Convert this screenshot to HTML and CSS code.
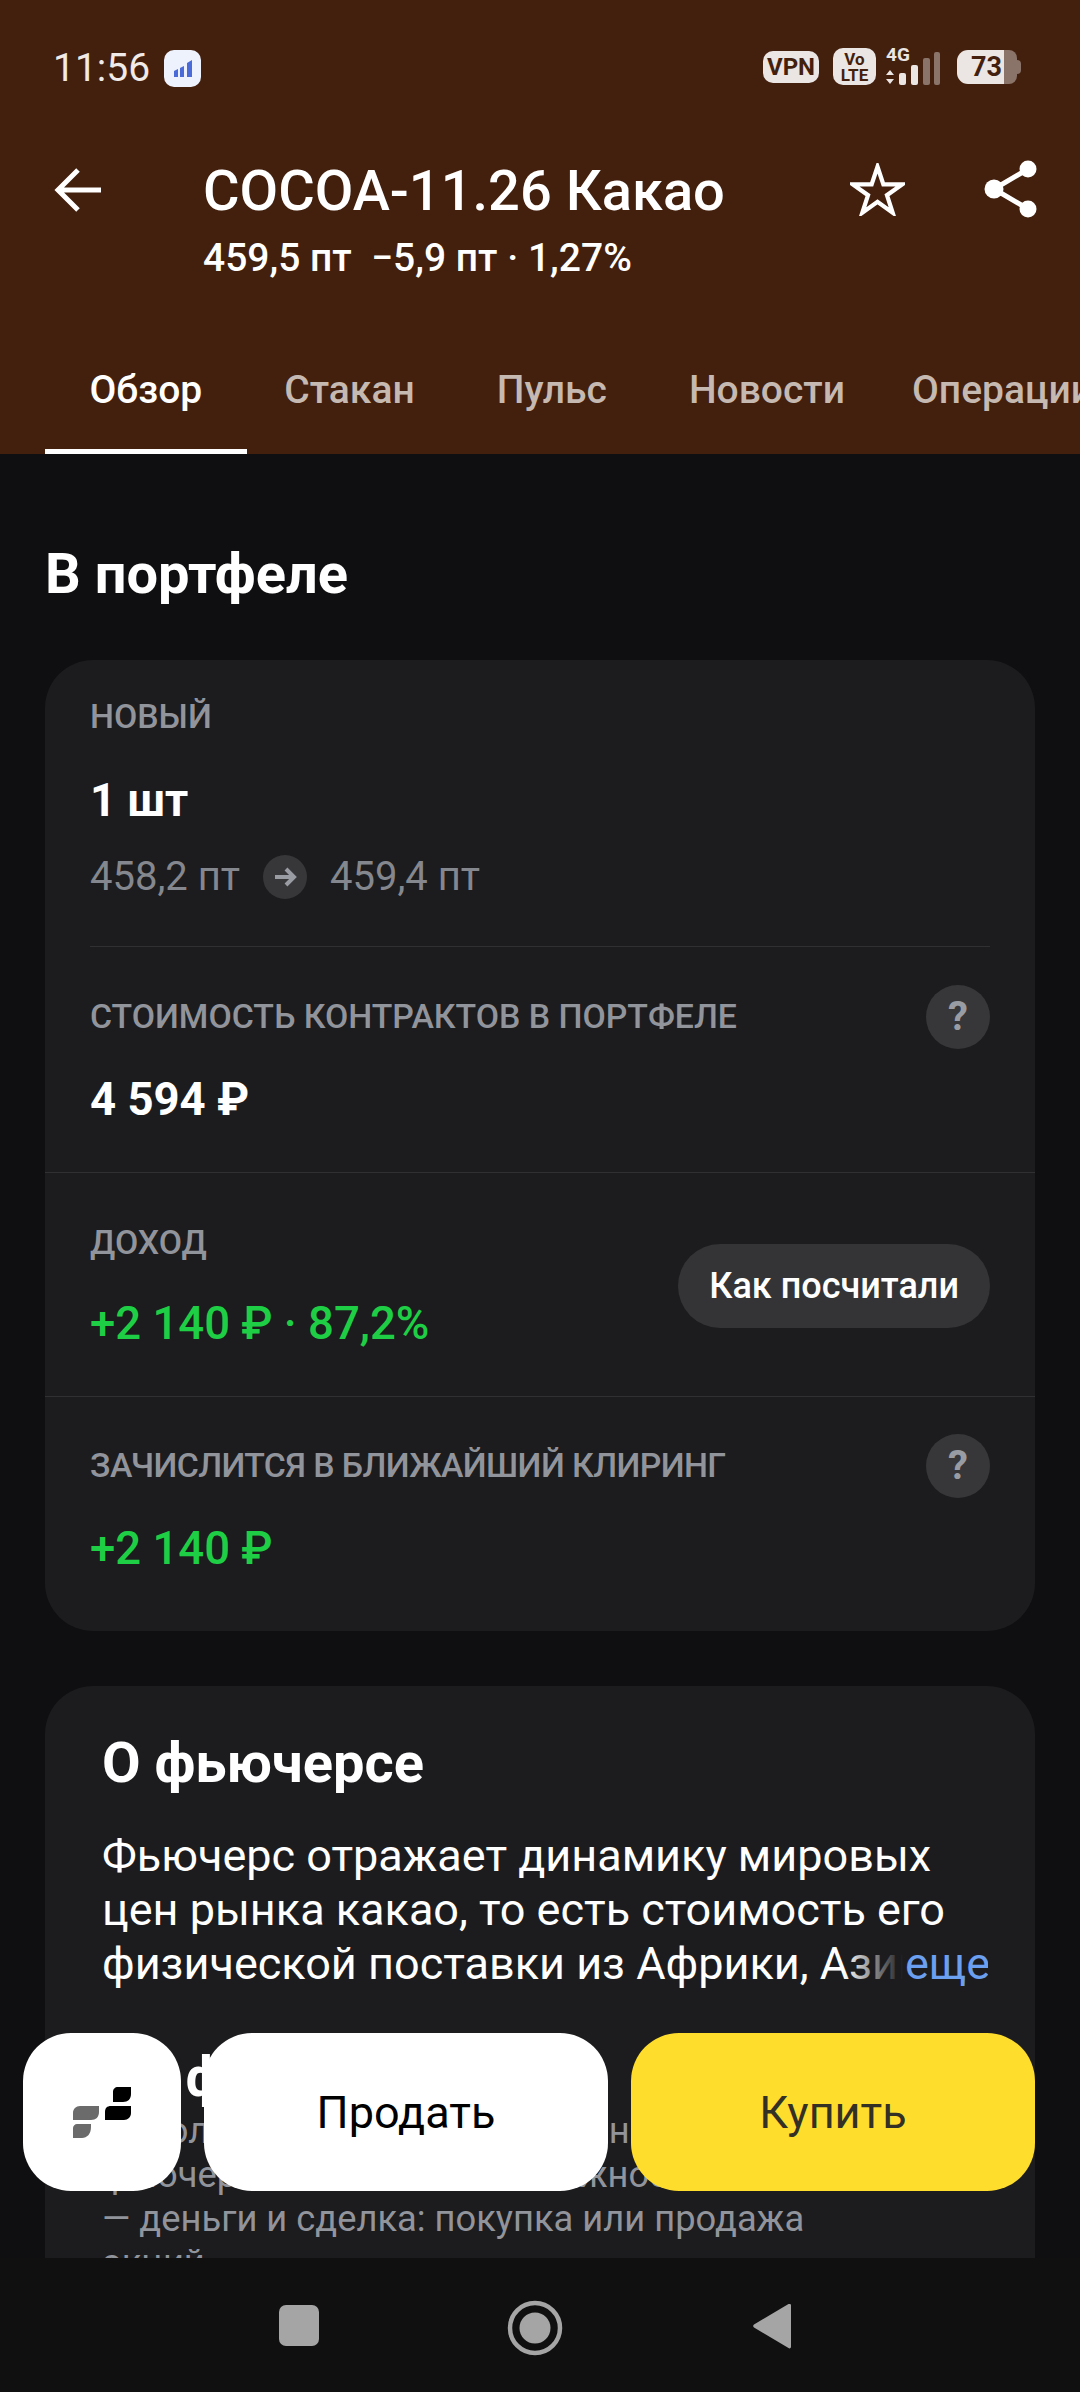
FILE: index.html
```html
<!DOCTYPE html>
<html lang="ru">
<head>
<meta charset="utf-8">
<title>COCOA-11.26 Какао</title>
<link rel="stylesheet" href="styles.css">
</head>
<body>
<div class="screen">
  <header class="top">
    <div class="status">
      <div class="status-left">
        <span class="time">11:56</span>
        <svg class="app-ind" width="37" height="37" viewBox="0 0 37 37"><rect width="37" height="37" rx="10" fill="#eef2fd"/><path d="M10 21l4-2v8h-4zM16 18l4-2v11h-4zM23 13l5-3v17h-5z" fill="#4a6bd8"/></svg>
      </div>
      <div class="status-right">
        <span class="pill vpn">VPN</span>
        <span class="pill volte">Vo<br>LTE</span>
        <div class="signal">
          <span class="net">4G</span>
          <svg width="54" height="38" viewBox="0 0 54 38"><path d="M0 17l4-5 4 5zM0 21h8l-4 5z" transform="translate(0 6)" fill="#ebe6e3"/><rect x="13" y="21" width="7" height="12" rx="2" fill="#ebe6e3"/><rect x="25" y="13" width="7" height="20" rx="2" fill="#ebe6e3"/><rect x="37" y="6" width="7" height="27" rx="2" fill="#8a7368"/><rect x="48" y="0" width="6" height="33" rx="2" fill="#8a7368"/></svg>
        </div>
        <div class="battery"><span class="batt-fill">73</span><span class="batt-rest"></span><span class="batt-tip"></span></div>
      </div>
    </div>
    <div class="titlebar">
      <svg class="back" width="48" height="48" viewBox="0 0 48 48"><path d="M47 24H4M24 4L4 24l20 20" fill="none" stroke="#fff" stroke-width="5"/></svg>
      <div class="title-block">
        <div class="title">COCOA-11.26 Какао</div>
        <div class="subtitle">459,5 пт &nbsp;−5,9 пт · 1,27%</div>
      </div>
      <svg class="star" width="55" height="53" viewBox="0 0 58 56"><path d="M29 4l6.200 18.600H55L39 34l6 18.500L29 41 13 52.500 19 34 3 22.600h19.800z" fill="none" stroke="#fff" stroke-width="4.500"/></svg>
      <svg class="share" width="54" height="58" viewBox="0 0 54 58"><path d="M44 9L10 29l34 20" fill="none" stroke="#fff" stroke-width="5"/><circle cx="44" cy="9" r="8.500" fill="#fff"/><circle cx="10" cy="29" r="9.500" fill="#fff"/><circle cx="44" cy="49" r="8.500" fill="#fff"/></svg>
    </div>
    <nav class="tabs">
      <span class="tab active">Обзор</span>
      <span class="tab">Стакан</span>
      <span class="tab">Пульс</span>
      <span class="tab">Новости</span>
      <span class="tab tab-last">Операции</span>
    </nav>
  </header>

  <main class="scroll">
    <h2 class="section-title">В портфеле</h2>
    <section class="card portfolio">
      <div class="row row-first inset">
        <div class="label">НОВЫЙ</div>
        <div class="value amount-first">1 шт</div>
        <div class="price-line">
          <span>458,2 пт</span>
          <svg class="price-arrow" width="44" height="44" viewBox="0 0 44 44"><circle cx="22" cy="22" r="22" fill="#37373a"/><path d="M12 22h19M23 14l8 8-8 8" fill="none" stroke="#9a9ca3" stroke-width="4"/></svg>
          <span>459,4 пт</span>
        </div>
      </div>
      <div class="row row-cost">
        <div class="label-head">
          <div class="label">СТОИМОСТЬ КОНТРАКТОВ В ПОРТФЕЛЕ</div>
          <span class="help">?</span>
        </div>
        <div class="value amount-cost">4 594 ₽</div>
      </div>
      <div class="row row-income">
        <div>
          <div class="label">ДОХОД</div>
          <div class="value gain income-value">+2 140 ₽ · 87,2%</div>
        </div>
        <span class="how">Как посчитали</span>
      </div>
      <div class="row row-clearing">
        <div class="label-head">
          <div class="label label-tight">ЗАЧИСЛИТСЯ В БЛИЖАЙШИЙ КЛИРИНГ</div>
          <span class="help">?</span>
        </div>
        <div class="value gain amount-cost">+2 140 ₽</div>
      </div>
    </section>

    <section class="card about">
      <h3 class="about-title">О фьючерсе</h3>
      <p class="about-text">Фьючерс отражает динамику мировых<br>цен рынка какао, то есть стоимость его<br>физической поставки из Африки, Азии и Южной Америки<span class="fade"></span><span class="more">еще</span></p>
      <h3 class="about-title type-title">На фьючерсах</h3>
      <p class="type-text">Исполнение — это механизм, на практике<br>фьючерс — это такие возможности<br>— деньги и сделка: покупка или продажа<br>акций</p>
    </section>
  </main>

  <nav class="sysnav">
    <span class="nav-square"></span>
    <svg width="56" height="56" viewBox="0 0 56 56"><circle cx="28" cy="28" r="25" fill="none" stroke="#a5a5a5" stroke-width="4.500"/><circle cx="28" cy="28" r="15.500" fill="#a5a5a5"/></svg>
    <svg width="40" height="48" viewBox="0 0 40 48"><path d="M38 2a1.500 1.500 0 0 1 1 1v42a1.500 1.500 0 0 1-2.500 1L2 25.500a2 2 0 0 1 0-3L36.500 2z" fill="#a5a5a5"/></svg>
  </nav>

  <div class="actions">
    <button class="btn btn-logo">
      <svg width="58" height="51" viewBox="0 0 58 51"><path d="M7 19h19v6c0 5-3 8-8 8H0v-7c0-4 3-7 7-7zM4 37h14v3c0 7-4 11-9 11H0V41c0-2 2-4 4-4z" fill="#6b6b6b"/><path d="M45 0h13v7c0 5-3 8-8 8H40V5c0-3 2-5 5-5zM38 19h20v7c0 4-3 7-7 7H32v-8c0-4 2-6 6-6z" fill="#000"/></svg>
    </button>
    <button class="btn btn-sell">Продать</button>
    <button class="btn btn-buy">Купить</button>
  </div>
</div>
</body>
</html>
```

FILE: styles.css
```css
* { box-sizing: border-box; }
html, body { margin: 0; padding: 0; background: #0f0f11; }
body { font-family: Roboto, "Noto Sans", sans-serif; color: #fff; }
.screen { position: relative; width: 1080px; height: 2392px; display: flex; flex-direction: column; overflow: hidden; background: #0f0f11; }

.top { height: 454px; flex: none; background: #431f0d; display: flex; flex-direction: column; }
.status { height: 136px; padding: 0 59px 0 53px; display: flex; justify-content: space-between; align-items: flex-start; }
.status-left { display: flex; align-items: center; gap: 14px; margin-top: 50px; }
.time { font-size: 39px; line-height: 37px; color: #f0ebe8; }
.app-ind { display: block; }
.status-right { display: flex; align-items: flex-start; margin-top: 48px; }
.pill { display: block; background: #ebe6e3; color: #431f0d; font-weight: 700; text-align: center; }
.vpn { width: 56px; height: 32px; margin-top: 3px; border-radius: 10px; font-size: 24px; line-height: 32px; }
.volte { width: 43px; height: 37px; margin-left: 14px; border-radius: 10px; font-size: 17px; line-height: 16px; padding-top: 3px; }
.signal { position: relative; width: 60px; height: 37px; margin-left: 10px; }
.net { position: absolute; left: 0; top: -2px; font-size: 19px; line-height: 18px; font-weight: 700; color: #ebe6e3; }
.signal svg { position: absolute; left: 0; top: 4px; }
.battery { display: flex; align-items: center; height: 34px; margin: 2px 0 0 11px; }
.batt-fill { width: 47px; height: 34px; background: #ebe6e3; border-radius: 11px 0 0 11px; color: #431f0d; font-size: 27px; font-weight: 700; line-height: 34px; text-align: right; padding-right: 2px; }
.batt-rest { width: 13px; height: 34px; background: #8a7368; border-radius: 0 8px 8px 0; }
.batt-tip { width: 4px; height: 14px; background: #8a7368; border-radius: 0 4px 4px 0; }

.titlebar { height: 134px; flex: none; display: flex; align-items: flex-start; padding-left: 54px; }
.back { margin-top: 30px; flex: none; }
.title-block { width: 648px; margin-left: 101px; }
.title { font-size: 56px; line-height: 64px; font-weight: 500; margin-top: 23px; white-space: nowrap; }
.subtitle { font-size: 39px; line-height: 44px; font-weight: 500; margin-top: 13px; white-space: nowrap; }
.star { margin-top: 27px; margin-left: -1px; flex: none; }
.share { margin-top: 24px; margin-left: 79px; flex: none; }

.tabs { flex: 1; min-height: 0; display: flex; padding-left: 45px; white-space: nowrap; overflow: hidden; }
.tab { display: block; height: 184px; padding: 98px 44.500px 0; margin-right: -7px; font-size: 39px; line-height: 44px; color: #c5b9b2; font-weight: 500; flex: none; }
.tab-last { margin-left: -15px; }
.tab.active { color: #fff; border-bottom: 5px solid #fff; }

.scroll { flex: 1; min-height: 0; overflow: hidden; padding: 88px 45px 0; }
.section-title { margin: 0 0 54px; font-size: 56px; line-height: 64px; font-weight: 700; }
.card { background: #1c1c1e; border-radius: 48px; }
.row { padding: 0 45px; }
.row-first { padding-top: 35px; padding-bottom: 48px; position: relative; }
.inset::after { content: ""; position: absolute; left: 45px; right: 45px; bottom: 0; height: 1px; background: #303033; }
.row-cost { padding-top: 37px; padding-bottom: 47px; border-top: 1px solid transparent; }
.row-income { padding-top: 48px; padding-bottom: 47px; border-top: 1px solid #303033; display: flex; justify-content: space-between; align-items: center; }
.row-clearing { padding-top: 37px; padding-bottom: 57px; border-top: 1px solid #303033; }
.label { font-size: 33.800px; line-height: 44px; color: #92949c; font-weight: 500; white-space: nowrap; }
.label-tight { letter-spacing: -.6px; }
.label-head { display: flex; justify-content: space-between; align-items: center; height: 64px; }
.help { width: 64px; height: 64px; border-radius: 50%; background: #37373a; color: #9a9ca3; font-size: 40px; font-weight: 700; line-height: 64px; text-align: center; }
.value { font-size: 45.500px; line-height: 50px; font-weight: 700; white-space: nowrap; }
.amount-first { margin-top: 37px; }
.amount-cost { margin-top: 26px; }
.income-value { margin-top: 34px; }
.gain { color: #1ecf45; font-weight: 500; }
.price-line { display: flex; align-items: center; margin-top: 29px; height: 44px; font-size: 40px; line-height: 44px; color: #85878e; }
.price-arrow { margin: 0 23px; flex: none; }
.how { display: block; height: 84px; margin-top: 2px; padding: 0 31px; border-radius: 42px; background: #343436; font-size: 36px; line-height: 84px; font-weight: 500; white-space: nowrap; }

.about { margin-top: 55px; padding: 47px 47px 0 57px; height: 900px; }
.about-title { margin: 0; font-size: 56px; line-height: 60px; font-weight: 700; white-space: nowrap; }
.about-text { position: relative; margin: 36px 0 0; font-size: 45px; line-height: 54px; white-space: nowrap; overflow: hidden; width: 886px; }
.fade { position: absolute; right: 85px; bottom: 0; width: 60px; height: 54px; background: linear-gradient(to right, rgba(28,28,30,0), #1c1c1e); }
.more { position: absolute; right: 0; bottom: 0; width: 85px; height: 54px; padding-left: 2px; background: #1c1c1e; color: #6b9ff0; }
.type-title { margin-top: 56px; }
.type-text { margin: 2px 0 0; font-size: 36.300px; line-height: 44px; color: #92949c; white-space: nowrap; }

.sysnav { height: 134px; flex: none; background: #101011; display: flex; align-items: flex-start; padding: 42px 0 0 279px; position: relative; }
.nav-square { width: 40px; height: 41px; margin-top: 5px; border-radius: 7px; background: #a5a5a5; }
.sysnav svg:nth-child(2) { margin: 0 0 0 188px; }
.sysnav svg:nth-child(3) { margin: 2px 0 0 189px; }

.actions { position: absolute; left: 23px; right: 45px; top: 2033px; display: flex; gap: 23px; }
.btn { display: block; height: 158px; border: 0; border-radius: 48px; font-family: inherit; font-size: 45px; padding: 0; }
.btn-logo { width: 158px; flex: none; background: #fff; }
.btn-logo svg { display: block; margin: 0 auto; }
.btn-sell { flex: 1; background: #fff; color: #000; }
.btn-buy { flex: 1; background: #ffdd2d; color: #333026; }
```
